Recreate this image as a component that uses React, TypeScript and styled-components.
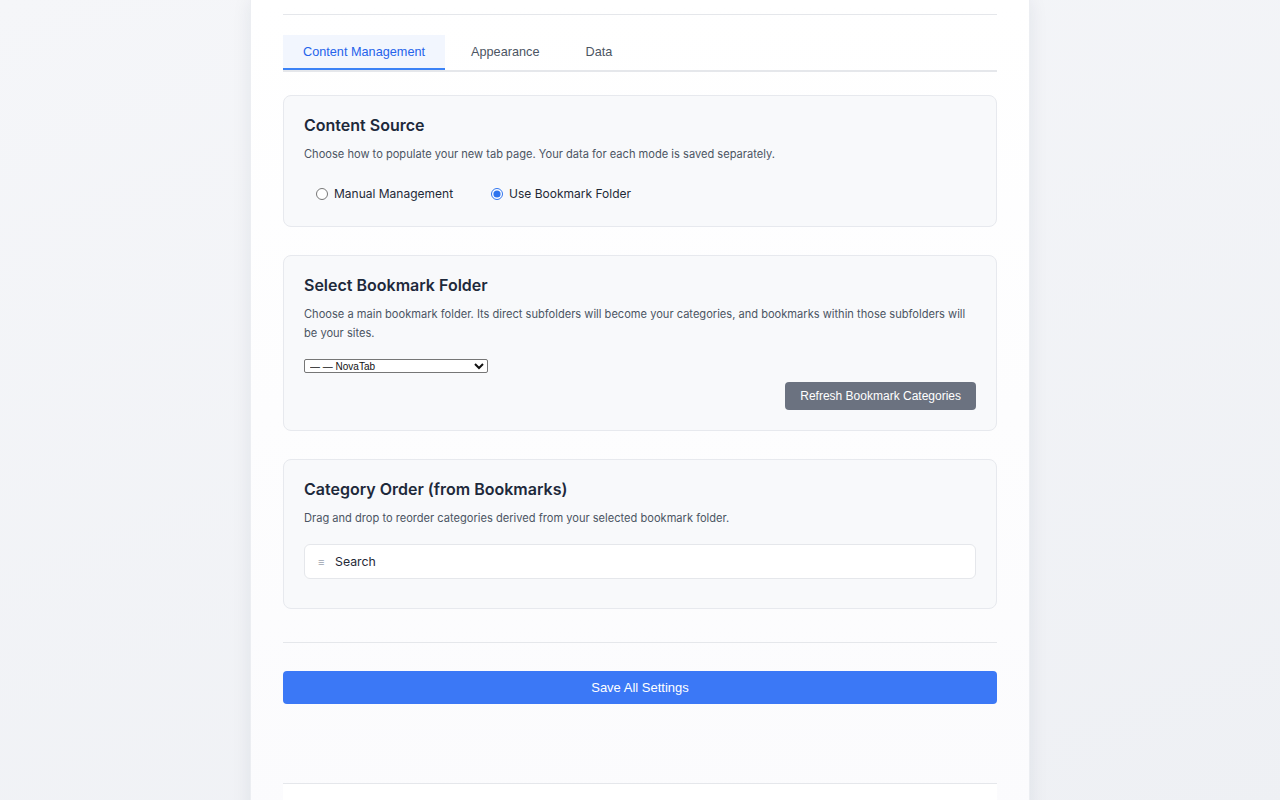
import React, { useState } from "react";
import styled, { createGlobalStyle } from "styled-components";

const GlobalStyle = createGlobalStyle`
  html, body { margin: 0; padding: 0; }
  body {
    min-height: 800px;
    background: linear-gradient(160deg, #f5f6f9 0%, #eef0f4 100%);
    font-family: Inter, "Noto Sans", sans-serif;
    overflow: hidden;
  }
`;

const Page = styled.div`
  display: flex;
  justify-content: center;
  min-height: 800px;
`;

const Panel = styled.main`
  width: 780px;
  box-sizing: border-box;
  padding: 14px 32px 0;
  background: linear-gradient(180deg, #ffffff 0%, #fbfbfd 100%);
  box-shadow: 0 0 18px rgba(30, 40, 60, 0.08);
  border-left: 1px solid #eceef2;
  border-right: 1px solid #eceef2;
`;

const HeaderRule = styled.div`
  border-top: 1px solid #e5e7eb;
  margin-bottom: 20px;
`;

const TabBar = styled.nav`
  display: flex;
  gap: 6px;
  border-bottom: 2px solid #e5e7eb;
  margin-bottom: 23px;
`;

const Tab = styled.button<{ $active?: boolean }>`
  height: 35px;
  box-sizing: border-box;
  padding: 0 20px;
  border: none;
  border-bottom: 2px solid ${(p) => (p.$active ? "#3b82f6" : "transparent")};
  background: ${(p) => (p.$active ? "#f2f6fe" : "transparent")};
  color: ${(p) => (p.$active ? "#2563eb" : "#4b5563")};
  font-family: "Liberation Sans", Arial, sans-serif;
  font-size: 12.7px;
  cursor: pointer;
`;

const Cards = styled.div`
  display: flex;
  flex-direction: column;
  gap: 28px;
`;

const Card = styled.section`
  background: #f8f9fb;
  border: 1px solid #e7e9ee;
  border-radius: 8px;
  padding: 20px;
`;

const CardTitle = styled.h2`
  margin: 0 0 11px;
  font-size: 16px;
  line-height: 18px;
  font-weight: 600;
  color: #1e293b;
`;

const CardText = styled.p`
  margin: 0;
  font-size: 11.1px;
  line-height: 19px;
  color: #4b5563;
`;

const RadioGroup = styled.div`
  display: flex;
  gap: 38px;
  margin: 16px 0 0 12px;
  padding: 4px 0 2px;
`;

const RadioLabel = styled.label`
  display: flex;
  align-items: center;
  gap: 6px;
  font-size: 12px;
  line-height: 20px;
  color: #1f2937;
  cursor: pointer;
`;

const Radio = styled.input`
  margin: 0;
  width: 12px;
  height: 12px;
  accent-color: #2f74ee;
`;

const FolderSelect = styled.select`
  display: block;
  margin-top: 16px;
  width: 184px;
  height: 14px;
  padding: 0 0 0 1px;
  box-sizing: border-box;
  font-family: "Liberation Sans", Arial, sans-serif;
  font-size: 10px;
  color: #111;
  background: #fff;
  border: 1px solid #767676;
  border-radius: 2px;
`;

const ActionRow = styled.div`
  display: flex;
  justify-content: flex-end;
  margin-top: 9px;
`;

const GrayButton = styled.button`
  height: 28px;
  padding: 0 15px;
  border: none;
  border-radius: 4px;
  background: #6b7280;
  color: #fff;
  font-family: "Liberation Sans", Arial, sans-serif;
  font-size: 12px;
  cursor: pointer;
`;

const SortList = styled.ul`
  list-style: none;
  margin: 16px 0 9px;
  padding: 0;
`;

const SortItem = styled.li`
  display: flex;
  align-items: center;
  gap: 9px;
  height: 35px;
  box-sizing: border-box;
  padding: 0 13px;
  background: #fff;
  border: 1px solid #e5e7eb;
  border-radius: 6px;
  font-size: 12.3px;
  color: #1f2937;
`;

const Handle = styled.span`
  color: #9ca3af;
  font-size: 11px;
  width: 8px;
`;

const SaveSection = styled.div`
  margin-top: 33px;
  border-top: 1px solid #e5e7eb;
  border-bottom: 1px solid #e5e7eb;
  padding: 28px 0 79px;
`;

const SaveButton = styled.button`
  display: block;
  width: 100%;
  height: 33px;
  border: none;
  border-radius: 4px;
  background: #3b78f6;
  color: #fff;
  font-family: "Liberation Sans", Arial, sans-serif;
  font-size: 13px;
  cursor: pointer;
`;

const Footer = styled.footer`
  height: 40px;
  background: #ffffff;
`;

export default function App() {
  const [tab, setTab] = useState("content");
  const [mode, setMode] = useState("bookmark");
  const tabs = [
    { id: "content", label: "Content Management" },
    { id: "appearance", label: "Appearance" },
    { id: "data", label: "Data" },
  ];
  return (
    <>
      <GlobalStyle />
      <Page>
        <Panel>
          <HeaderRule />
          <TabBar>
            {tabs.map((t) => (
              <Tab key={t.id} $active={tab === t.id} onClick={() => setTab(t.id)}>
                {t.label}
              </Tab>
            ))}
          </TabBar>
          <Cards>
            <Card>
              <CardTitle>Content Source</CardTitle>
              <CardText>
                Choose how to populate your new tab page. Your data for each mode is saved separately.
              </CardText>
              <RadioGroup>
                <RadioLabel>
                  <Radio
                    type="radio"
                    name="mode"
                    checked={mode === "manual"}
                    onChange={() => setMode("manual")}
                  />
                  Manual Management
                </RadioLabel>
                <RadioLabel>
                  <Radio
                    type="radio"
                    name="mode"
                    checked={mode === "bookmark"}
                    onChange={() => setMode("bookmark")}
                  />
                  Use Bookmark Folder
                </RadioLabel>
              </RadioGroup>
            </Card>
            <Card>
              <CardTitle>Select Bookmark Folder</CardTitle>
              <CardText>
                Choose a main bookmark folder. Its direct subfolders will become your categories, and bookmarks within those subfolders will be your sites.
              </CardText>
              <FolderSelect defaultValue="novatab">
                <option value="novatab">— — NovaTab</option>
              </FolderSelect>
              <ActionRow>
                <GrayButton>Refresh Bookmark Categories</GrayButton>
              </ActionRow>
            </Card>
            <Card>
              <CardTitle>Category Order (from Bookmarks)</CardTitle>
              <CardText>Drag and drop to reorder categories derived from your selected bookmark folder.</CardText>
              <SortList>
                <SortItem>
                  <Handle>≡</Handle>
                  Search
                </SortItem>
              </SortList>
            </Card>
          </Cards>
          <SaveSection>
            <SaveButton>Save All Settings</SaveButton>
          </SaveSection>
          <Footer />
        </Panel>
      </Page>
    </>
  );
}
